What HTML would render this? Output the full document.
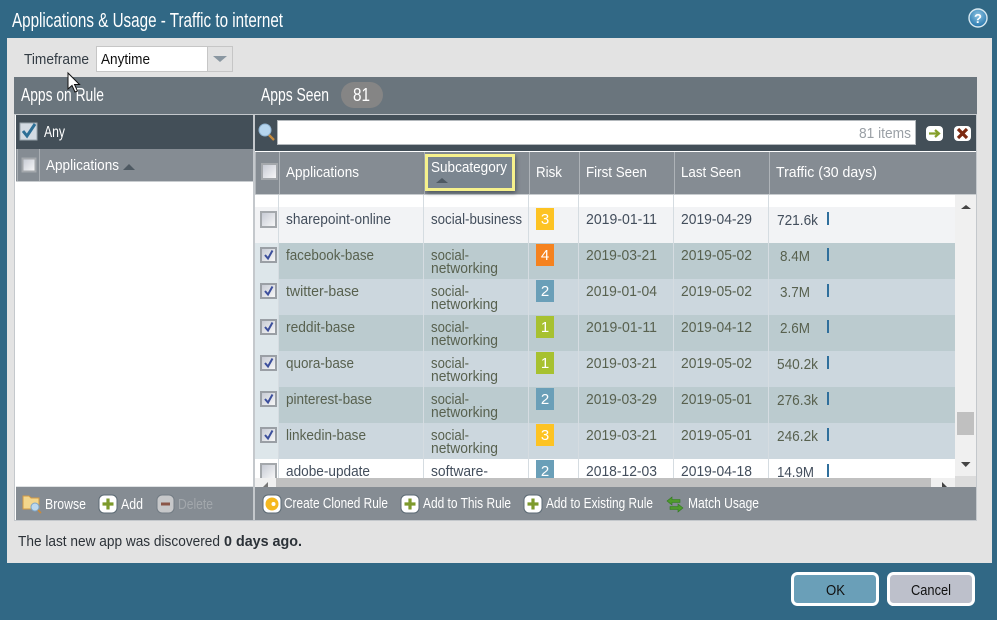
<!DOCTYPE html>
<html><head><meta charset="utf-8"><title>Applications &amp; Usage</title>
<style>
html,body{margin:0;padding:0;background:#316885;width:997px;height:620px;overflow:hidden}
svg{display:block;font-family:"Liberation Sans",sans-serif}
.h{fill:#fff}
.d{fill:#434e5c;font-size:15px}
.s{fill:#58614f;font-size:15px}
.t{fill:#fff;font-size:15px}
.n{fill:#fff;font-size:15px;text-anchor:middle}
</style></head><body>
<svg width="997" height="620" viewBox="0 0 997 620" xmlns="http://www.w3.org/2000/svg">
<defs>
<linearGradient id="cb" x1="0" y1="0" x2="1" y2="1"><stop offset="0" stop-color="#c4c8d2"/><stop offset="1" stop-color="#fafafa"/></linearGradient>
<radialGradient id="hb" cx=".5" cy=".35" r=".7"><stop offset="0" stop-color="#8fc4e2"/><stop offset="1" stop-color="#1c6fa8"/></radialGradient>
<g id="chk"><rect x="1" y="1" width="15" height="15" fill="url(#cb)" stroke="#a4a8ac" stroke-width="2"/></g>
<g id="ck"><rect x="1" y="1" width="15" height="14" fill="url(#cb)" stroke="#9a9fa5" stroke-width="2"/><path d="M5 8l3 3.500 4.500-8" fill="none" stroke="#3c4f9c" stroke-width="2"/></g>
<g id="plus"><rect x="0" y="0" width="18" height="18" rx="5" fill="#fff" stroke="#5c6a74" stroke-width="1"/><path d="M9 3.500v11M3.500 9h11" stroke="#7d9a2c" stroke-width="3.200"/></g>
</defs>

<!-- dialog -->
<rect width="997" height="620" fill="#316885"/>
<rect x="7" y="38" width="985" height="525" fill="#e3e3e3"/>
<text x="12" y="27" class="h" font-size="20" textLength="271" lengthAdjust="spacingAndGlyphs">Applications &amp; Usage - Traffic to internet</text>
<circle cx="978" cy="18" r="9" fill="url(#hb)" stroke="#d8e8f0" stroke-width="1.400"/>
<text x="978" y="23" font-size="13" font-weight="bold" fill="#fff" text-anchor="middle">?</text>

<!-- timeframe -->
<text x="24" y="64" font-size="15" fill="#333c44" textLength="65" lengthAdjust="spacingAndGlyphs">Timeframe</text>
<rect x="96.500" y="46.500" width="136" height="25" fill="#fff" stroke="#c6c6c6"/>
<rect x="207.500" y="46.500" width="25" height="25" fill="#e2e2e2" stroke="#c6c6c6"/>
<path d="M213 56h14l-7 6z" fill="#8a97a1"/>
<text x="101" y="64" font-size="15" fill="#111" textLength="49" lengthAdjust="spacingAndGlyphs">Anytime</text>

<!-- section bar -->
<rect x="14" y="77" width="963" height="37" fill="#6a757d"/>
<text x="21" y="101" class="h" font-size="18.500" textLength="83" lengthAdjust="spacingAndGlyphs">Apps on Rule</text>
<text x="261" y="101" class="h" font-size="18.500" textLength="68" lengthAdjust="spacingAndGlyphs">Apps Seen</text>
<rect x="341" y="82" width="42" height="26" rx="13" fill="#858585"/>
<text x="353" y="101" class="h" font-size="18.500" textLength="17" lengthAdjust="spacingAndGlyphs">81</text>

<!-- left panel -->
<rect x="14.500" y="114.500" width="239" height="406" fill="#fff" stroke="#c4c8cc"/>
<rect x="16" y="115" width="237" height="34" fill="#434f58"/>
<rect x="20" y="123" width="17" height="17" fill="#d3dbe3" stroke="#9aa4ac"/>
<path d="M23 131l4 5 8-12" fill="none" stroke="#2d6f96" stroke-width="3"/>
<text x="44" y="137" class="h" font-size="15.500" textLength="21" lengthAdjust="spacingAndGlyphs">Any</text>
<rect x="16" y="149" width="237" height="32" fill="#858c93"/>
<rect x="16" y="181" width="237" height="1" fill="#c8cccf"/>
<rect x="17" y="149" width="1" height="32" fill="#a9aeb3"/>
<rect x="39" y="149" width="1" height="32" fill="#a9aeb3"/>
<rect x="22.500" y="158.500" width="13" height="13" fill="url(#cb)" stroke="#a4a8ac" stroke-width="2"/>
<text x="46" y="170" class="t" textLength="73" lengthAdjust="spacingAndGlyphs">Applications</text>
<path d="M123 170l6-6 6 6z" fill="#4e5962"/>
<rect x="16" y="487" width="237" height="33" fill="#858c93"/>
<rect x="16" y="486" width="237" height="1" fill="#dfe2e4"/>

<!-- left footer -->
<path d="M23 496h6l2 2h8v11H23z" fill="#f3d68c" stroke="#d29a45"/>
<circle cx="35" cy="507" r="4" fill="#bcd8ee" stroke="#7ea6c8"/>
<path d="M38 510l3 3" stroke="#c88a3a" stroke-width="1.600"/>
<text x="45" y="509" class="t" textLength="41" lengthAdjust="spacingAndGlyphs">Browse</text>
<use href="#plus" x="99" y="495"/>
<text x="121" y="509" class="t" textLength="22" lengthAdjust="spacingAndGlyphs">Add</text>
<rect x="157" y="495" width="17" height="18" rx="5" fill="#c7c8ca" stroke="#737c84"/>
<rect x="161" y="502.500" width="9" height="3" fill="#8a5648"/>
<text x="178" y="509" font-size="15" fill="#a2a7ac" textLength="35" lengthAdjust="spacingAndGlyphs">Delete</text>

<!-- right panel -->
<rect x="254.500" y="114.500" width="722" height="406" fill="#fff" stroke="#c4c8cc"/>
<rect x="255" y="115" width="721" height="36" fill="#434f58"/>
<circle cx="265" cy="130" r="6" fill="#b6d5ee" stroke="#8fb3d1"/>
<path d="M269 135l5 5" stroke="#c48a3e" stroke-width="2.400"/>
<rect x="277.500" y="120.500" width="638" height="24" fill="#fff" stroke="#b3b8bc"/>
<text x="859" y="138" font-size="15" fill="#9aa0a6" textLength="52" lengthAdjust="spacingAndGlyphs">81 items</text>
<rect x="926" y="126" width="17" height="15" rx="4" fill="#fff"/>
<path d="M929 133.500h9M935 130l4 3.500-4 3.500" fill="none" stroke="#86a02c" stroke-width="2.200"/>
<rect x="954" y="126" width="17" height="15" rx="4" fill="#fff"/>
<path d="M958 129l9 9M967 129l-9 9" stroke="#7c2a12" stroke-width="3.200"/>

<!-- header -->
<rect x="255" y="152" width="721" height="42" fill="#858c93"/>
<rect x="255" y="194" width="721" height="1" fill="#c8cccf"/>
<g fill="#aeb3b8"><rect x="255" y="152" width="1" height="42"/><rect x="279" y="152" width="1" height="42"/><rect x="424" y="152" width="1" height="42"/><rect x="529" y="152" width="1" height="42"/><rect x="579" y="152" width="1" height="42"/><rect x="674" y="152" width="1" height="42"/><rect x="769" y="152" width="1" height="42"/></g>
<use href="#chk" x="261" y="163"/>
<text x="286" y="177" class="t" textLength="73" lengthAdjust="spacingAndGlyphs">Applications</text>
<text x="536" y="177" class="t" textLength="26" lengthAdjust="spacingAndGlyphs">Risk</text>
<text x="586" y="177" class="t" textLength="61" lengthAdjust="spacingAndGlyphs">First Seen</text>
<text x="681" y="177" class="t" textLength="60" lengthAdjust="spacingAndGlyphs">Last Seen</text>
<text x="776" y="177" class="t" textLength="101" lengthAdjust="spacingAndGlyphs">Traffic (30 days)</text>

<!-- rows -->
<rect x="255" y="195" width="700" height="12" fill="#fff"/>
<rect x="255" y="207" width="700" height="36" fill="#f2f3f5"/>
<rect x="255" y="243" width="700" height="36" fill="#bbcbcf"/>
<rect x="255" y="279" width="700" height="36" fill="#ccd7de"/>
<rect x="255" y="315" width="700" height="36" fill="#bbcbcf"/>
<rect x="255" y="351" width="700" height="36" fill="#ccd7de"/>
<rect x="255" y="387" width="700" height="36" fill="#bbcbcf"/>
<rect x="255" y="423" width="700" height="36" fill="#ccd7de"/>
<rect x="255" y="459" width="700" height="19" fill="#fff"/>
<rect x="255" y="243" width="23" height="216" fill="#dde6ea"/>
<g fill="#d5dce1"><rect x="278" y="195" width="1" height="283"/><rect x="423" y="195" width="1" height="283"/><rect x="528" y="195" width="1" height="283"/><rect x="578" y="195" width="1" height="283"/><rect x="673" y="195" width="1" height="283"/><rect x="768" y="195" width="1" height="283"/></g>

<use href="#chk" x="260" y="211"/>
<use href="#ck" x="260" y="247"/><use href="#ck" x="260" y="283"/><use href="#ck" x="260" y="319"/><use href="#ck" x="260" y="355"/><use href="#ck" x="260" y="391"/><use href="#ck" x="260" y="427"/>
<use href="#chk" x="260" y="463"/>

<!-- badges -->
<rect x="536" y="208" width="18" height="22" fill="#fdc323"/>
<rect x="536" y="244" width="18" height="22" fill="#f5821f"/>
<rect x="536" y="280" width="18" height="22" fill="#6a9fb8"/>
<rect x="536" y="316" width="18" height="22" fill="#a7c130"/>
<rect x="536" y="352" width="18" height="22" fill="#a7c130"/>
<rect x="536" y="388" width="18" height="22" fill="#6a9fb8"/>
<rect x="536" y="424" width="18" height="22" fill="#fdc323"/>
<rect x="536" y="460" width="18" height="18" fill="#6a9fb8"/>
<text x="545" y="224" class="n">3</text><text x="545" y="260" class="n">4</text><text x="545" y="296" class="n">2</text><text x="545" y="332" class="n">1</text><text x="545" y="368" class="n">1</text><text x="545" y="404" class="n">2</text><text x="545" y="440" class="n">3</text><text x="545" y="476" class="n">2</text>

<!-- traffic bars -->
<g fill="#2f6f9c"><rect x="827" y="212" width="2" height="13"/><rect x="827" y="248" width="2" height="13"/><rect x="827" y="284" width="2" height="13"/><rect x="827" y="320" width="2" height="13"/><rect x="827" y="356" width="2" height="13"/><rect x="827" y="392" width="2" height="13"/><rect x="827" y="428" width="2" height="13"/><rect x="827" y="464" width="2" height="13"/></g>

<!-- row text -->
<text x="286" y="224" class="d" textLength="105" lengthAdjust="spacingAndGlyphs">sharepoint-online</text>
<text x="431" y="224" class="d" textLength="91" lengthAdjust="spacingAndGlyphs">social-business</text>
<text x="586" y="224" class="d" textLength="71" lengthAdjust="spacingAndGlyphs">2019-01-11</text>
<text x="681" y="224" class="d" textLength="71" lengthAdjust="spacingAndGlyphs">2019-04-29</text>
<text x="777" y="225" class="d" textLength="41" lengthAdjust="spacingAndGlyphs">721.6k</text>

<text x="286" y="260" class="s" textLength="88" lengthAdjust="spacingAndGlyphs">facebook-base</text>
<text x="431" y="260" class="s" textLength="38" lengthAdjust="spacingAndGlyphs">social-</text><text x="431" y="273" class="s" textLength="67" lengthAdjust="spacingAndGlyphs">networking</text>
<text x="586" y="260" class="s" textLength="71" lengthAdjust="spacingAndGlyphs">2019-03-21</text>
<text x="681" y="260" class="s" textLength="71" lengthAdjust="spacingAndGlyphs">2019-05-02</text>
<text x="780" y="261" class="s" textLength="30" lengthAdjust="spacingAndGlyphs">8.4M</text>

<text x="286" y="296" class="s" textLength="73" lengthAdjust="spacingAndGlyphs">twitter-base</text>
<text x="431" y="296" class="s" textLength="38" lengthAdjust="spacingAndGlyphs">social-</text><text x="431" y="309" class="s" textLength="67" lengthAdjust="spacingAndGlyphs">networking</text>
<text x="586" y="296" class="s" textLength="71" lengthAdjust="spacingAndGlyphs">2019-01-04</text>
<text x="681" y="296" class="s" textLength="71" lengthAdjust="spacingAndGlyphs">2019-05-02</text>
<text x="780" y="297" class="s" textLength="30" lengthAdjust="spacingAndGlyphs">3.7M</text>

<text x="286" y="332" class="s" textLength="69" lengthAdjust="spacingAndGlyphs">reddit-base</text>
<text x="431" y="332" class="s" textLength="38" lengthAdjust="spacingAndGlyphs">social-</text><text x="431" y="345" class="s" textLength="67" lengthAdjust="spacingAndGlyphs">networking</text>
<text x="586" y="332" class="s" textLength="71" lengthAdjust="spacingAndGlyphs">2019-01-11</text>
<text x="681" y="332" class="s" textLength="71" lengthAdjust="spacingAndGlyphs">2019-04-12</text>
<text x="780" y="333" class="s" textLength="30" lengthAdjust="spacingAndGlyphs">2.6M</text>

<text x="286" y="368" class="s" textLength="68" lengthAdjust="spacingAndGlyphs">quora-base</text>
<text x="431" y="368" class="s" textLength="38" lengthAdjust="spacingAndGlyphs">social-</text><text x="431" y="381" class="s" textLength="67" lengthAdjust="spacingAndGlyphs">networking</text>
<text x="586" y="368" class="s" textLength="71" lengthAdjust="spacingAndGlyphs">2019-03-21</text>
<text x="681" y="368" class="s" textLength="71" lengthAdjust="spacingAndGlyphs">2019-05-02</text>
<text x="777" y="369" class="s" textLength="41" lengthAdjust="spacingAndGlyphs">540.2k</text>

<text x="286" y="404" class="s" textLength="86" lengthAdjust="spacingAndGlyphs">pinterest-base</text>
<text x="431" y="404" class="s" textLength="38" lengthAdjust="spacingAndGlyphs">social-</text><text x="431" y="417" class="s" textLength="67" lengthAdjust="spacingAndGlyphs">networking</text>
<text x="586" y="404" class="s" textLength="71" lengthAdjust="spacingAndGlyphs">2019-03-29</text>
<text x="681" y="404" class="s" textLength="71" lengthAdjust="spacingAndGlyphs">2019-05-01</text>
<text x="777" y="405" class="s" textLength="41" lengthAdjust="spacingAndGlyphs">276.3k</text>

<text x="286" y="440" class="s" textLength="80" lengthAdjust="spacingAndGlyphs">linkedin-base</text>
<text x="431" y="440" class="s" textLength="38" lengthAdjust="spacingAndGlyphs">social-</text><text x="431" y="453" class="s" textLength="67" lengthAdjust="spacingAndGlyphs">networking</text>
<text x="586" y="440" class="s" textLength="71" lengthAdjust="spacingAndGlyphs">2019-03-21</text>
<text x="681" y="440" class="s" textLength="71" lengthAdjust="spacingAndGlyphs">2019-05-01</text>
<text x="777" y="441" class="s" textLength="41" lengthAdjust="spacingAndGlyphs">246.2k</text>

<text x="286" y="476" class="d" textLength="84" lengthAdjust="spacingAndGlyphs">adobe-update</text>
<text x="431" y="476" class="d" textLength="57" lengthAdjust="spacingAndGlyphs">software-</text>
<text x="586" y="476" class="d" textLength="71" lengthAdjust="spacingAndGlyphs">2018-12-03</text>
<text x="681" y="476" class="d" textLength="71" lengthAdjust="spacingAndGlyphs">2019-04-18</text>
<text x="777" y="477" class="d" textLength="37" lengthAdjust="spacingAndGlyphs">14.9M</text>

<!-- scrollbars -->
<rect x="955" y="195" width="21" height="282" fill="#f0f0f0"/>
<rect x="957" y="412" width="17" height="23" fill="#c0c0c0"/>
<path d="M961 209l5-4 5 4z" fill="#444"/>
<path d="M961 462h9.500l-4.750 5z" fill="#444"/>
<rect x="255" y="478" width="700" height="9" fill="#f0f0f0"/>
<rect x="276" y="478" width="655" height="9" fill="#c0c0c0"/>
<rect x="955" y="476" width="21" height="11" fill="#dcdcdc"/>
<path d="M263 487l5-5v5z" fill="#777"/>
<path d="M942 482l5 5h-5z" fill="#444"/>

<!-- subcategory highlight -->
<rect x="426.500" y="155.500" width="87" height="34" fill="#7b8690" stroke="#f6f18c" stroke-width="3" style="filter:drop-shadow(1px 2px 2px rgba(30,40,50,.55))"/>
<text x="431" y="172" class="t" textLength="76" lengthAdjust="spacingAndGlyphs">Subcategory</text>
<path d="M436 183l6-5 6 5z" fill="#4e5962"/>

<!-- right footer -->
<rect x="255" y="487" width="721" height="33" fill="#858c93"/>
<rect x="263" y="495" width="18" height="18" rx="5" fill="#fff" stroke="#5c6a74"/>
<circle cx="272" cy="504" r="6.500" fill="#f5b81f"/>
<circle cx="273.500" cy="504" r="2" fill="#fff"/>
<text x="284" y="508" class="t" textLength="104" lengthAdjust="spacingAndGlyphs">Create Cloned Rule</text>
<use href="#plus" x="401" y="495"/>
<text x="423" y="508" class="t" textLength="88" lengthAdjust="spacingAndGlyphs">Add to This Rule</text>
<use href="#plus" x="524" y="495"/>
<text x="546" y="508" class="t" textLength="107" lengthAdjust="spacingAndGlyphs">Add to Existing Rule</text>
<path d="M667 501l5-4v2.500h8v3h-8v2.500zM683 508l-5-4v2.500h-8v3h8v2.500z" fill="#4f9a2c" stroke="#2e7a1d" stroke-width=".6"/>
<text x="688" y="508" class="t" textLength="71" lengthAdjust="spacingAndGlyphs">Match Usage</text>

<!-- message -->
<text x="18" y="546" font-size="14.500" fill="#2c3238" textLength="202" lengthAdjust="spacingAndGlyphs">The last new app was discovered</text>
<text x="224" y="546" font-size="14.500" font-weight="bold" fill="#2c3238" textLength="78" lengthAdjust="spacingAndGlyphs">0 days ago.</text>

<!-- buttons -->
<rect x="792.500" y="573.500" width="85" height="31" rx="5" fill="#6a9fb8" stroke="#fff" stroke-width="3"/>
<text x="826" y="595" font-size="15" fill="#111" textLength="19" lengthAdjust="spacingAndGlyphs">OK</text>
<rect x="888.500" y="573.500" width="85" height="31" rx="5" fill="#bdc0cb" stroke="#fff" stroke-width="3"/>
<text x="911" y="595" font-size="15" fill="#111" textLength="40" lengthAdjust="spacingAndGlyphs">Cancel</text>

<!-- cursor -->
<path d="M68 73v16l4-3.500 3 6.500 2.500-1-3-6.500h5z" fill="#fff" stroke="#111" stroke-width="1"/>
</svg>
</body></html>
